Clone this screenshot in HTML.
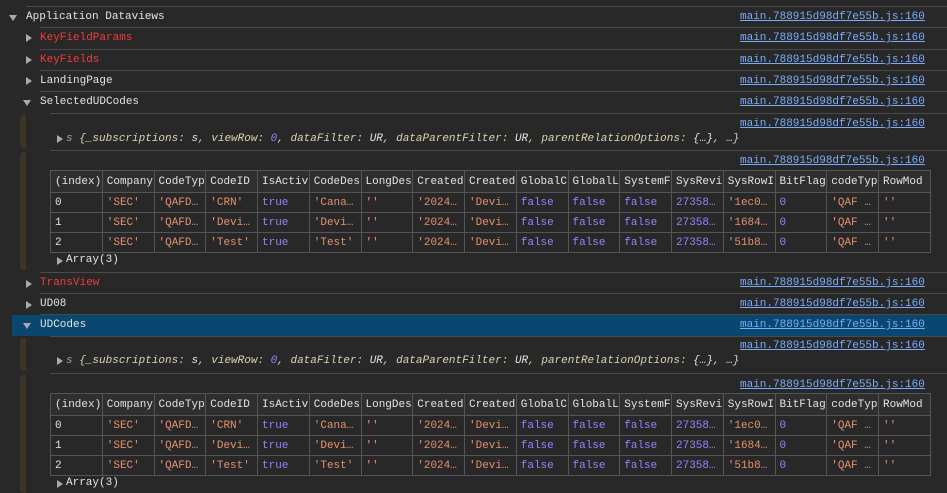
<!DOCTYPE html>
<html><head><meta charset="utf-8"><style>
*{margin:0;padding:0;box-sizing:border-box}
body{width:947px;height:493px;background:#282828;overflow:hidden;position:relative;font-family:"Liberation Mono",monospace;font-size:11px;color:#e3e3e3}
.a{position:absolute;white-space:pre;line-height:14px}
.ln{position:absolute;height:1px;background:#4a4a4a;right:0}
.lk{position:absolute;left:740px;color:#7cacf8;text-decoration:underline;line-height:14px}
.r{color:#f43a3a}
.tr{position:absolute;width:0;height:0;border-top:4px solid transparent;border-bottom:4px solid transparent;border-left:6px solid #aaa}
.td{position:absolute;width:0;height:0;border-left:4px solid transparent;border-right:4px solid transparent;border-top:6px solid #aaa}
.bar{position:absolute;left:20px;width:6px;background:#3b3624;border-radius:4px 0 0 4px}
.sel{position:absolute;left:12px;right:0;top:315px;height:21px;background:#094771}
table{position:absolute;left:50px;width:881px;border-collapse:collapse;table-layout:fixed}
td,th{border:1px solid #555;padding:0 4px;height:20px;white-space:nowrap;overflow:hidden;font-weight:normal;text-align:left;font-size:11px}
th{height:22px;background:#2f2f2f;color:#e3e3e3}
.s{color:#e5906e}.p{color:#9980ff}
.o{font-style:italic;color:#dcd3b0}.o .g{color:#9aa0a6}.o .v{color:#e3e3e3}
</style></head><body>
<div class="ln" style="left:26px;top:6px"></div>
<div class="td" style="left:9px;top:15px"></div>
<div class="a" style="left:26px;top:10px">Application Dataviews</div>
<div class="lk" style="top:10px">main.788915d98df7e55b.js:160</div>
<div class="ln" style="left:40px;top:27px"></div>
<div class="tr" style="left:26px;top:34px"></div>
<div class="a r" style="left:40px;top:31px">KeyFieldParams</div>
<div class="lk" style="top:31px">main.788915d98df7e55b.js:160</div>
<div class="ln" style="left:40px;top:49px"></div>
<div class="tr" style="left:26px;top:56px"></div>
<div class="a r" style="left:40px;top:53px">KeyFields</div>
<div class="lk" style="top:53px">main.788915d98df7e55b.js:160</div>
<div class="ln" style="left:40px;top:70px"></div>
<div class="tr" style="left:26px;top:77px"></div>
<div class="a" style="left:40px;top:74px">LandingPage</div>
<div class="lk" style="top:74px">main.788915d98df7e55b.js:160</div>
<div class="ln" style="left:40px;top:91px"></div>
<div class="td" style="left:23px;top:100px"></div>
<div class="a" style="left:40px;top:95px">SelectedUDCodes</div>
<div class="lk" style="top:95px">main.788915d98df7e55b.js:160</div>
<div class="ln" style="left:50px;top:113px"></div>
<div class="bar" style="top:115px;height:33px"></div>
<div class="lk" style="top:117px">main.788915d98df7e55b.js:160</div>
<div class="tr" style="left:57px;top:135px"></div>
<div class="a o" style="left:66px;top:132px"><span class="g">s</span> {_subscriptions: <span class="v">s</span>, viewRow: <span class="p">0</span>, dataFilter: <span class="v">UR</span>, dataParentFilter: <span class="v">UR</span>, parentRelationOptions: <span class="v">{…}</span>, <span class="v">…</span>}</div>
<div class="ln" style="left:50px;top:150px"></div>
<div class="bar" style="top:152px;height:118px"></div>
<div class="lk" style="top:154px">main.788915d98df7e55b.js:160</div>
<table style="top:170px"><tr><th>(index)</th><th>Company</th><th>CodeTyp</th><th>CodeID</th><th>IsActiv</th><th>CodeDes</th><th>LongDes</th><th>Created</th><th>Created</th><th>GlobalC</th><th>GlobalL</th><th>SystemF</th><th>SysRevi</th><th>SysRowI</th><th>BitFlag</th><th>codeTyp</th><th>RowMod</th></tr>
<tr><td>0</td><td class="s">'SEC'</td><td class="s">'QAFD…</td><td class="s">'CRN'</td><td class="p">true</td><td class="s">'Cana…</td><td class="s">''</td><td class="s">'2024…</td><td class="s">'Devi…</td><td class="p">false</td><td class="p">false</td><td class="p">false</td><td class="p">27358…</td><td class="s">'1ec0…</td><td class="p">0</td><td class="s">'QAF …</td><td class="s">''</td></tr>
<tr><td>1</td><td class="s">'SEC'</td><td class="s">'QAFD…</td><td class="s">'Devi…</td><td class="p">true</td><td class="s">'Devi…</td><td class="s">''</td><td class="s">'2024…</td><td class="s">'Devi…</td><td class="p">false</td><td class="p">false</td><td class="p">false</td><td class="p">27358…</td><td class="s">'1684…</td><td class="p">0</td><td class="s">'QAF …</td><td class="s">''</td></tr>
<tr><td>2</td><td class="s">'SEC'</td><td class="s">'QAFD…</td><td class="s">'Test'</td><td class="p">true</td><td class="s">'Test'</td><td class="s">''</td><td class="s">'2024…</td><td class="s">'Devi…</td><td class="p">false</td><td class="p">false</td><td class="p">false</td><td class="p">27358…</td><td class="s">'51b8…</td><td class="p">0</td><td class="s">'QAF …</td><td class="s">''</td></tr></table>
<div class="tr" style="left:57px;top:257px"></div>
<div class="a" style="left:66px;top:253px">Array(3)</div>
<div class="ln" style="left:40px;top:272px"></div>
<div class="tr" style="left:26px;top:280px"></div>
<div class="a r" style="left:40px;top:276px">TransView</div>
<div class="lk" style="top:276px">main.788915d98df7e55b.js:160</div>
<div class="ln" style="left:40px;top:293px"></div>
<div class="tr" style="left:26px;top:301px"></div>
<div class="a" style="left:40px;top:297px">UD08</div>
<div class="lk" style="top:297px">main.788915d98df7e55b.js:160</div>
<div class="ln" style="left:40px;top:314px"></div>
<div class="sel"></div>
<div class="td" style="left:23px;top:323px"></div>
<div class="a" style="left:40px;top:318px">UDCodes</div>
<div class="lk" style="top:318px">main.788915d98df7e55b.js:160</div>
<div class="ln" style="left:50px;top:336px"></div>
<div class="bar" style="top:338px;height:33px"></div>
<div class="lk" style="top:339px">main.788915d98df7e55b.js:160</div>
<div class="tr" style="left:57px;top:357px"></div>
<div class="a o" style="left:66px;top:354px"><span class="g">s</span> {_subscriptions: <span class="v">s</span>, viewRow: <span class="p">0</span>, dataFilter: <span class="v">UR</span>, dataParentFilter: <span class="v">UR</span>, parentRelationOptions: <span class="v">{…}</span>, <span class="v">…</span>}</div>
<div class="ln" style="left:50px;top:373px"></div>
<div class="bar" style="top:375px;height:118px"></div>
<div class="lk" style="top:378px">main.788915d98df7e55b.js:160</div>
<table style="top:393px"><tr><th>(index)</th><th>Company</th><th>CodeTyp</th><th>CodeID</th><th>IsActiv</th><th>CodeDes</th><th>LongDes</th><th>Created</th><th>Created</th><th>GlobalC</th><th>GlobalL</th><th>SystemF</th><th>SysRevi</th><th>SysRowI</th><th>BitFlag</th><th>codeTyp</th><th>RowMod</th></tr>
<tr><td>0</td><td class="s">'SEC'</td><td class="s">'QAFD…</td><td class="s">'CRN'</td><td class="p">true</td><td class="s">'Cana…</td><td class="s">''</td><td class="s">'2024…</td><td class="s">'Devi…</td><td class="p">false</td><td class="p">false</td><td class="p">false</td><td class="p">27358…</td><td class="s">'1ec0…</td><td class="p">0</td><td class="s">'QAF …</td><td class="s">''</td></tr>
<tr><td>1</td><td class="s">'SEC'</td><td class="s">'QAFD…</td><td class="s">'Devi…</td><td class="p">true</td><td class="s">'Devi…</td><td class="s">''</td><td class="s">'2024…</td><td class="s">'Devi…</td><td class="p">false</td><td class="p">false</td><td class="p">false</td><td class="p">27358…</td><td class="s">'1684…</td><td class="p">0</td><td class="s">'QAF …</td><td class="s">''</td></tr>
<tr><td>2</td><td class="s">'SEC'</td><td class="s">'QAFD…</td><td class="s">'Test'</td><td class="p">true</td><td class="s">'Test'</td><td class="s">''</td><td class="s">'2024…</td><td class="s">'Devi…</td><td class="p">false</td><td class="p">false</td><td class="p">false</td><td class="p">27358…</td><td class="s">'51b8…</td><td class="p">0</td><td class="s">'QAF …</td><td class="s">''</td></tr></table>
<div class="tr" style="left:57px;top:480px"></div>
<div class="a" style="left:66px;top:476px">Array(3)</div>
</body></html>
